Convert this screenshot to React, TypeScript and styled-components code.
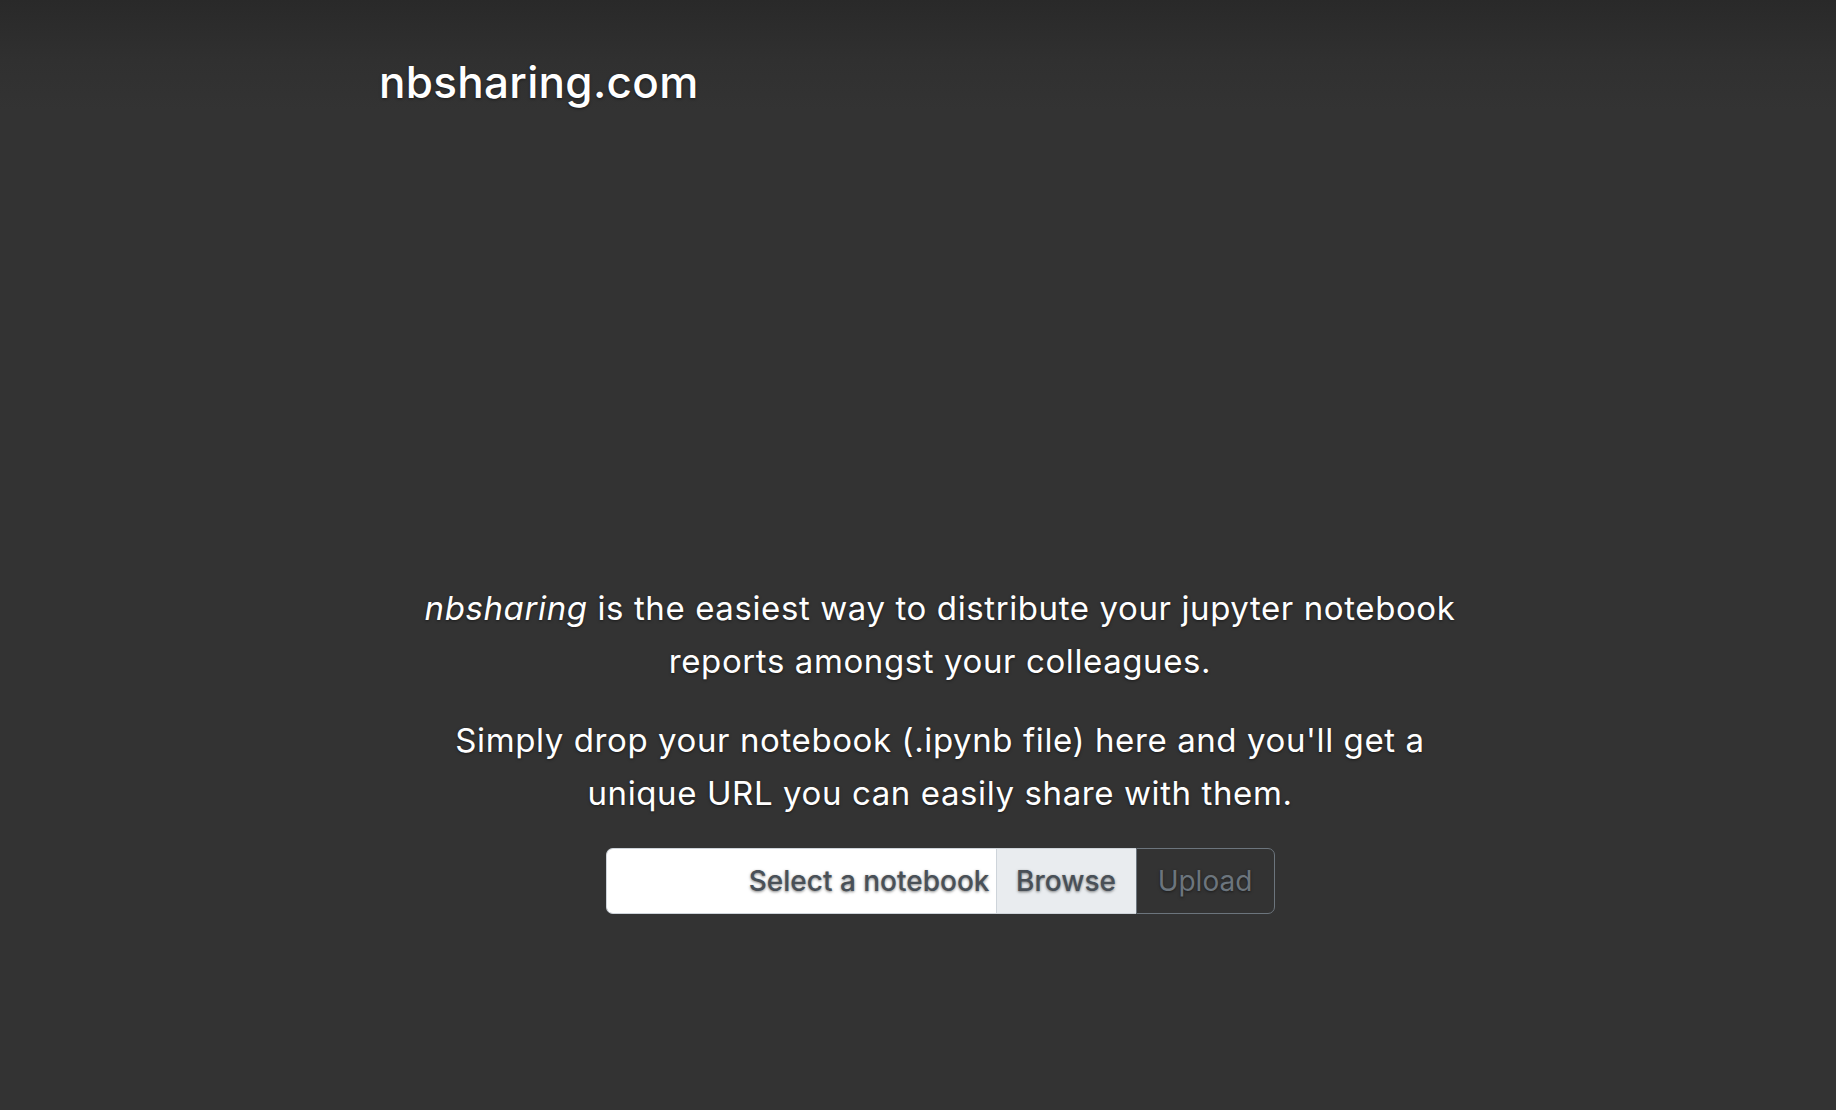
import React from "react";
import styled, { createGlobalStyle } from "styled-components";

const GlobalStyle = createGlobalStyle`
  html, body {
    margin: 0;
    padding: 0;
    height: 100%;
  }
  body {
    background: linear-gradient(to bottom, #292929 0px, #303030 60px, #333333 110px, #333333 100%);
    background-color: #333333;
    color: #ffffff;
    font-family: Inter, "Liberation Sans", Arial, sans-serif;
    text-shadow: 0 1.4px 2.8px rgba(0, 0, 0, 0.5);
  }
  #root {
    min-height: 100%;
  }
`;

const Page = styled.div`
  min-height: 1110px;
  box-sizing: border-box;
  padding-left: 44px;
  display: flex;
  justify-content: center;
`;

const Container = styled.div`
  width: 1122px;
  display: flex;
  flex-direction: column;
`;

const Masthead = styled.header`
  padding-top: 56px;
  display: flex;
`;

const Brand = styled.h3`
  margin: 0;
  font-size: 44px;
  line-height: 52px;
  font-weight: 500;
  letter-spacing: 0.3px;
`;

const Main = styled.main`
  margin-top: 474px;
  display: flex;
  flex-direction: column;
  align-items: center;
  text-align: center;
`;

const Lead = styled.p<{ $gap?: number }>`
  margin: 0 0 ${(p) => p.$gap ?? 0}px;
  font-size: 33px;
  line-height: 53px;
  font-weight: 400;
  letter-spacing: 0.6px;
  white-space: nowrap;
`;

const Form = styled.form`
  display: flex;
  align-items: stretch;
  height: 66px;
  width: 669px;
`;

const FileBox = styled.label`
  flex: 1;
  display: flex;
  box-sizing: border-box;
  border: 1.5px solid #ced4da;
  border-right: none;
  border-radius: 7px 0 0 7px;
  background: #ffffff;
  overflow: hidden;
`;

const FileLabel = styled.span`
  flex: 1;
  display: flex;
  align-items: center;
  justify-content: flex-end;
  padding-right: 6px;
  color: #495057;
  font-size: 28px;
  font-weight: 500;
`;

const BrowseTag = styled.span`
  width: 139px;
  display: flex;
  align-items: center;
  justify-content: center;
  border-left: 1.5px solid #ced4da;
  background: #e9ecef;
  color: #495057;
  font-size: 28px;
  font-weight: 500;
`;

const UploadButton = styled.button`
  width: 139px;
  box-sizing: border-box;
  margin: 0;
  padding: 0;
  border: 1.5px solid #6c757d;
  border-radius: 0 7px 7px 0;
  background: transparent;
  color: #6c757d;
  font-family: inherit;
  font-size: 28px;
  font-weight: 400;
  text-shadow: inherit;
  cursor: default;
`;

export default function App() {
  return (
    <>
      <GlobalStyle />
      <Page>
        <Container>
          <Masthead>
            <Brand>nbsharing.com</Brand>
          </Masthead>
          <Main>
            <Lead $gap={26}>
              <em>nbsharing</em> is the easiest way to distribute your jupyter notebook
              <br />
              reports amongst your colleagues.
            </Lead>
            <Lead $gap={28}>
              Simply drop your notebook (.ipynb file) here and you'll get a
              <br />
              unique URL you can easily share with them.
            </Lead>
            <Form onSubmit={(e) => e.preventDefault()}>
              <FileBox>
                <FileLabel>Select a notebook</FileLabel>
                <BrowseTag>Browse</BrowseTag>
              </FileBox>
              <UploadButton type="submit" disabled>
                Upload
              </UploadButton>
            </Form>
          </Main>
        </Container>
      </Page>
    </>
  );
}
